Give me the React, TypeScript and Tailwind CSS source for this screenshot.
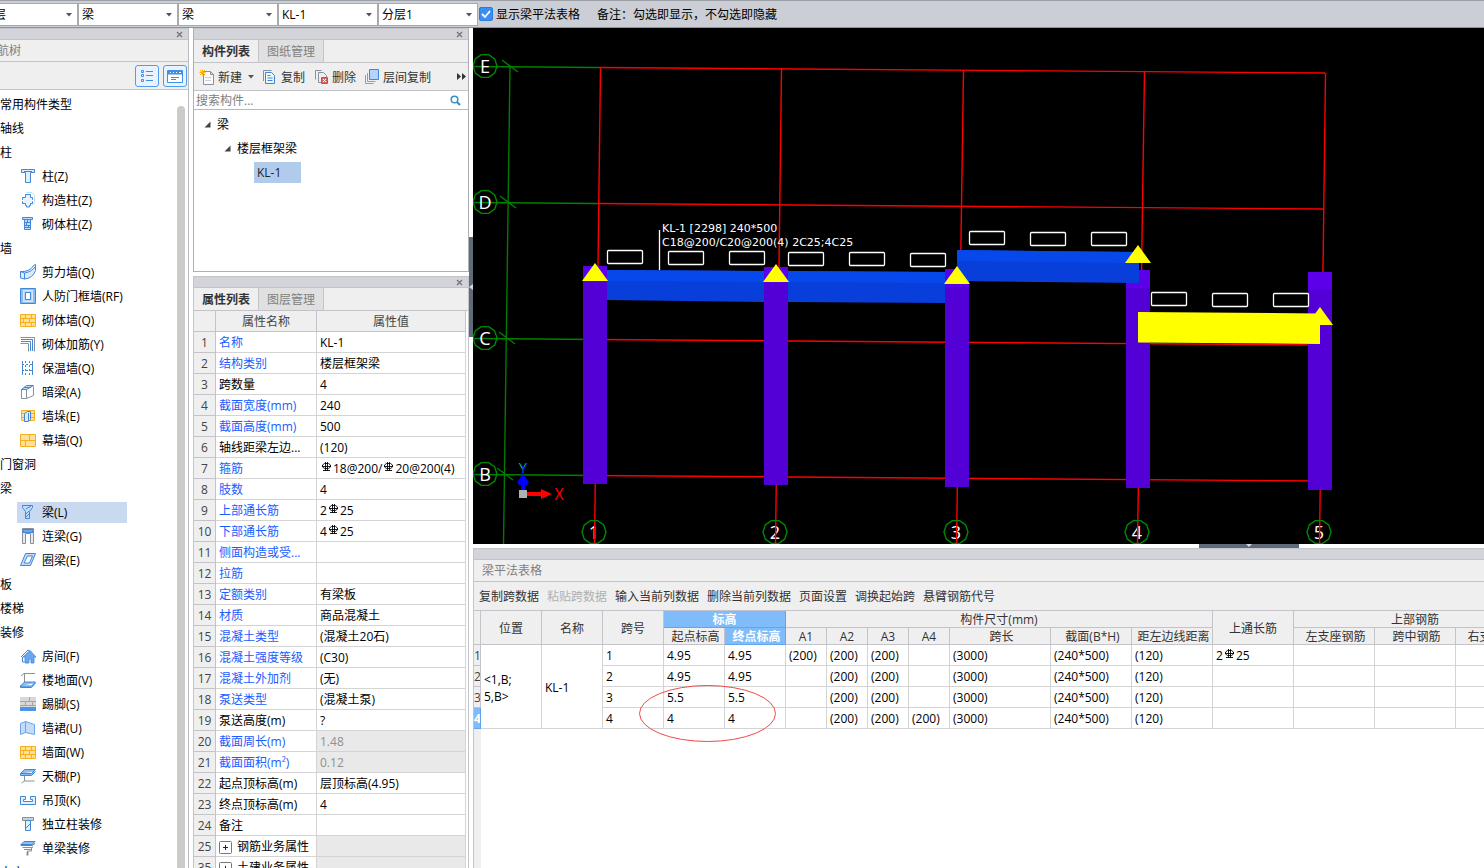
import { useState } from 'react';
import type { ReactNode } from 'react';

const B = '#3f87d9';
const L = '#c3dcf8';
const G = '#87919b';
const O = '#f5b01c';
const Y = '#fde0a0';

const bricks = (
  <g>
    <path d="M.5 2.500h15v12H.5z" fill={Y} stroke={O} />
    <path d="M.5 6.500h15M.5 10.500h15M5.500 2.500v4M11.500 2.500v4M3.500 6.500v4M9.500 6.500v4M5.500 10.500v4M11.500 10.500v4" stroke={O} />
  </g>
);

const icons: Record<string, ReactNode> = {
  column: <path d="M1.500 1.500h13v3h-4v10h-5v-10h-4zM4 3.500h8" fill="#e3effc" stroke={B} />,
  tieColumn: (
    <g>
      <path d="M6 .5h6l2.500 3v7l-2.500 3" stroke={L} />
      <path d="M5.500 2.500h5v3h2v6h-2v2h-1v1.500h-3v-1.500h-1v-2h-3v-6h3z" fill="#e8f2fd" stroke={B} />
      <path d="M2 8.500h2M11 8.500h3" stroke="#fff" strokeWidth="1.500" />
    </g>
  ),
  brickColumn: (
    <g>
      <path d="M2.500 1.500h10v2h-10zM4.500 3.500h6v10h-6z" fill={L} stroke={B} />
      <path d="M5 6.500h5M5 9.500h5M5 11.500h5M7.500 4v2M6.500 7v2M8.500 10v1" stroke={B} />
    </g>
  ),
  shearWall: <path d="M.5 7.500q9 1 13-6l2-1v6q-3 8-11 8.500l-4-1zM4.500 9v6M.5 7.500l4 1.500q7-1 11-6.500" fill="#dcebfb" stroke={B} />,
  gate: (
    <g>
      <path d="M.5 .5h15v15h-15z" fill="#8dbcf0" stroke={B} />
      <path d="M3.500 2.500h9v11h-9z" fill="#b9d7f7" stroke="#d8e8fb" />
      <path d="M5.500 4.500h5v7h-5z" fill="#fff" stroke={B} />
    </g>
  ),
  bricks,
  rebar: (
    <g>
      <path d="M.5 1.500h14v14M.5 7.500h8v8" stroke={G} />
      <path d="M1 3.500h11.500V15M1 5.500h9.500V15" stroke={B} />
    </g>
  ),
  insulation: (
    <g>
      <path d="M2.500 1v14M12.500 1v14" stroke={B} />
      <path d="M5.500 1v14M9.500 1v14" stroke={B} strokeDasharray="2 2" />
      <path d="M2 4.500h11M2 10.500h11" stroke={B} strokeDasharray="2 2" />
    </g>
  ),
  hiddenBeam: (
    <g>
      <path d="M1.500 5.500h5v9h-5zM6.500 14.500l7-3v-9" fill="#fff" stroke={G} />
      <path d="M1.500 5.500l5-4h7l-7 4zM4 3.500h7" fill={L} stroke={B} />
    </g>
  ),
  buttress: (
    <g>
      <path d="M1.500 2.500h13v10h-13z" fill={Y} stroke={O} />
      <path d="M1.500 5.500h13M1.500 9.500h13" stroke={O} />
      <path d="M4.500 5.500l3-2h3v8l-2 2h-4zM8.500 5v8" fill="#dcebfb" stroke={B} />
    </g>
  ),
  curtain: (
    <g>
      <path d="M.5 2.500h15v12H.5z" fill={Y} stroke={O} />
      <path d="M.5 8.500h15M9.500 2.500v6M5.500 8.500v6" stroke={O} />
    </g>
  ),
  beam: (
    <g>
      <path d="M2.500 1.500h10v2l-3 4v7h-4v-7l-3-4z" fill={L} stroke={B} />
      <path d="M6 5l5-3M6 10l3-3M6 13l3-3" stroke={B} />
    </g>
  ),
  linkBeam: (
    <g>
      <path d="M2.500 .5h11v15h-3v-10h-5v10h-3z" fill="#e7eaed" stroke={G} />
      <path d="M3 1.500h10v3H3z" fill="#6ba6e9" stroke={B} />
    </g>
  ),
  ringBeam: <path d="M5.500 1.500h10l-5 12H.5zM7.500 4h5l-3 7H4z" fill={L} fillRule="evenodd" stroke={B} />,
  room: (
    <g>
      <path d="M1 9l7-7 3 2M2.500 9v5h2" stroke={B} />
      <path d="M3 9l7-6.500L16 9h-2v6h-3v-4H9v4H5V9z" fill="#6ba6ee" stroke={B} strokeWidth=".8" />
    </g>
  ),
  floor: (
    <g>
      <path d="M1 4l3-2.500h11M4.500 2v8" stroke={G} />
      <path d="M.5 14l4-4h11l-4 4zM.5 14v1.500h11l4-4.500" fill="#8dbcf0" stroke={B} />
    </g>
  ),
  skirting: (
    <g>
      <path d="M0 1h16v10H0z" fill="#d8d8d8" />
      <path d="M0 5.500h16M0 9.500h16M9.500 1v4M5.500 5v5M12.500 5v5" stroke="#a5a5a5" />
      <path d="M0 11h16v4H0z" fill="#4d94e6" />
    </g>
  ),
  dado: <path d="M.5 3.500l5-2v11l-5 2zM5.500 1.500l9 3v10l-9-2z" fill="#c3dcf8" stroke="#6ba6e9" />,
  ceiling: (
    <g>
      <path d="M4.500 5v8h10M4.500 13l-3 2" stroke={G} />
      <path d="M.5 5.500l4-4h11l-4 4zM.5 5.500v2h11l4-4" fill="#8dbcf0" stroke={B} />
    </g>
  ),
  suspended: <path d="M.5 4.500h5v3h-2v2h9v-2h-2v-3h5v8H.5z" fill="#e3effc" stroke={B} />,
  soloColumn: (
    <g>
      <path d="M2.500 1.500h11v3h-11z" fill="#cdd2d6" stroke={G} />
      <path d="M5.500 4.500h5v10h-5zM6 12l4-4" fill="#e3effc" stroke={B} />
    </g>
  ),
  soloBeam: (
    <g>
      <path d="M1 4.500l3-3h11l-3 3zM1 4.500v1h11l3-2" fill="#8dbcf0" stroke={B} />
      <path d="M2.500 7.500h10v-1M4 9.500h7M11.500 8v3H7.500v4" stroke={G} />
      <path d="M7.500 12v3.500" stroke={G} strokeWidth="2" />
    </g>
  ),
  create: (
    <g>
      <path d="M4.500 2.500h7l3 3v10h-10zM11.500 2.500v3h3" fill="#fafafa" stroke={G} />
      <path d="M6 8.500h6M6 11.500h6" stroke="#d4c9d8" />
      <path d="M1 1l5 5M6 1L1 6M3.500 .5v6M.5 3.500h6" stroke={O} />
    </g>
  ),
  copy: (
    <g>
      <path d="M.5 12V1.500h8" stroke={G} />
      <path d="M2.500 3.500h6l3 3v8h-9z" fill="#eef5fd" stroke={B} />
      <path d="M4.500 6.500h3M4.500 9h5M4.500 11.500h5" stroke={B} />
    </g>
  ),
  remove: (
    <g>
      <path d="M1.500 10.500v-9h6M4.500 13.500v-10h5l3 3v2M4.500 13.500h3" stroke={G} />
      <path d="M7.500 8.500h6v6h-6z" fill="#e2645f" stroke="#c8504b" />
      <path d="M9 10l3 3M12 10l-3 3" stroke="#fff" />
    </g>
  ),
  layerCopy: (
    <g>
      <path d="M.5 6v8.500h8M2.500 4v8.500h8" stroke="#e38a3c" />
      <path d="M4.500 .5h9v10h-9z" fill="#b5d4fb" stroke={B} />
    </g>
  ),
};

function Icon({ name }: { name: string }) {
  return (
    <svg viewBox="0 0 16 16" fill="none" className="size-4 shrink-0" aria-hidden="true">
      {icons[name]}
    </svg>
  );
}

type TreeNode = { label: string; icon?: string };

const navTree: TreeNode[] = [
  { label: '常用构件类型' },
  { label: '轴线' },
  { label: '柱' },
  { label: '柱(Z)', icon: 'column' },
  { label: '构造柱(Z)', icon: 'tieColumn' },
  { label: '砌体柱(Z)', icon: 'brickColumn' },
  { label: '墙' },
  { label: '剪力墙(Q)', icon: 'shearWall' },
  { label: '人防门框墙(RF)', icon: 'gate' },
  { label: '砌体墙(Q)', icon: 'bricks' },
  { label: '砌体加筋(Y)', icon: 'rebar' },
  { label: '保温墙(Q)', icon: 'insulation' },
  { label: '暗梁(A)', icon: 'hiddenBeam' },
  { label: '墙垛(E)', icon: 'buttress' },
  { label: '幕墙(Q)', icon: 'curtain' },
  { label: '门窗洞' },
  { label: '梁' },
  { label: '梁(L)', icon: 'beam' },
  { label: '连梁(G)', icon: 'linkBeam' },
  { label: '圈梁(E)', icon: 'ringBeam' },
  { label: '板' },
  { label: '楼梯' },
  { label: '装修' },
  { label: '房间(F)', icon: 'room' },
  { label: '楼地面(V)', icon: 'floor' },
  { label: '踢脚(S)', icon: 'skirting' },
  { label: '墙裙(U)', icon: 'dado' },
  { label: '墙面(W)', icon: 'bricks' },
  { label: '天棚(P)', icon: 'ceiling' },
  { label: '吊顶(K)', icon: 'suspended' },
  { label: '独立柱装修', icon: 'soloColumn' },
  { label: '单梁装修', icon: 'soloBeam' },
  { label: '土方' },
];

type Property = { no: number; name: string; value: string; link?: boolean; locked?: boolean; group?: boolean };

// '#' in a value stands for the HRB400 bar mark
const properties: Property[] = [
  { no: 1, name: '名称', value: 'KL-1', link: true },
  { no: 2, name: '结构类别', value: '楼层框架梁', link: true },
  { no: 3, name: '跨数量', value: '4' },
  { no: 4, name: '截面宽度(mm)', value: '240', link: true },
  { no: 5, name: '截面高度(mm)', value: '500', link: true },
  { no: 6, name: '轴线距梁左边...', value: '(120)' },
  { no: 7, name: '箍筋', value: '#18@200/#20@200(4)', link: true },
  { no: 8, name: '肢数', value: '4', link: true },
  { no: 9, name: '上部通长筋', value: '2#25', link: true },
  { no: 10, name: '下部通长筋', value: '4#25', link: true },
  { no: 11, name: '侧面构造或受...', value: '', link: true },
  { no: 12, name: '拉筋', value: '', link: true },
  { no: 13, name: '定额类别', value: '有梁板', link: true },
  { no: 14, name: '材质', value: '商品混凝土', link: true },
  { no: 15, name: '混凝土类型', value: '(混凝土20石)', link: true },
  { no: 16, name: '混凝土强度等级', value: '(C30)', link: true },
  { no: 17, name: '混凝土外加剂', value: '(无)', link: true },
  { no: 18, name: '泵送类型', value: '(混凝土泵)', link: true },
  { no: 19, name: '泵送高度(m)', value: '?' },
  { no: 20, name: '截面周长(m)', value: '1.48', link: true, locked: true },
  { no: 21, name: '截面面积(m²)', value: '0.12', link: true, locked: true },
  { no: 22, name: '起点顶标高(m)', value: '层顶标高(4.95)' },
  { no: 23, name: '终点顶标高(m)', value: '4' },
  { no: 24, name: '备注', value: '' },
  { no: 25, name: '钢筋业务属性', value: '', locked: true, group: true },
  { no: 35, name: '土建业务属性', value: '', locked: true, group: true },
];

function RebarMark() {
  return (
    <svg viewBox="0 0 11 10" fill="none" stroke="#000" className="mx-px inline-block h-2.5 w-[11px] align-[1px]" role="img" aria-label="HRB400">
      <path d="M3.500 1.500h4l2 1.500v2l-2 1.500h-4L1.500 5V3zM4.500 0v9M6.500 0v9M1 4.500h9M2 8.500h7" strokeWidth=".9" />
    </svg>
  );
}

function BarText({ text }: { text: string }) {
  const parts = text.split('#');
  return (
    <>
      {parts.map((part, i) => (
        <span key={i}>
          {i > 0 && <RebarMark />}
          {part}
        </span>
      ))}
    </>
  );
}

function Strip({ closable = true }: { closable?: boolean }) {
  return (
    <div className="flex h-3 shrink-0 items-center justify-end border-y border-[#c3c3c9] bg-[#d3d4da] pr-1">
      {closable && (
        <button aria-label="关闭" className="flex size-2.5 items-center justify-center">
          <svg viewBox="0 0 7 7" className="size-[7px]" stroke="#777" strokeWidth="1.400">
            <path d="M1 1l5 5M6 1L1 6" />
          </svg>
        </button>
      )}
    </div>
  );
}

function Tabs({ labels }: { labels: string[] }) {
  const [active, setActive] = useState(0);
  return (
    <div className="flex h-[23px] shrink-0 border-b border-[#c3c3c9] bg-[#efefef]" role="tablist">
      {labels.map((label, i) => (
        <button
          key={label}
          role="tab"
          aria-selected={i === active}
          onClick={() => setActive(i)}
          className={
            i === active
              ? 'w-[65px] border-r border-[#c3c3c9] pt-0.5 font-bold text-[#333]'
              : 'w-[65px] border-r border-[#c3c3c9] bg-[#e0e0e0] pt-0.5 text-[#808080]'
          }
        >
          {label}
        </button>
      ))}
    </div>
  );
}

function Combo({ label, value }: { label: string; value: string }) {
  return (
    <div className="relative h-[23px] w-25 shrink-0 border border-[#a9a9a9] bg-white">
      <select aria-label={label} className="h-full w-full appearance-none pt-0.5 pl-[3px] text-black outline-none">
        <option>{value}</option>
      </select>
      <svg viewBox="0 0 6 4" className="pointer-events-none absolute top-[9px] right-[5px] h-1 w-1.5" fill="#555">
        <path d="M0 0h6L3 3.500z" />
      </svg>
    </div>
  );
}

function TopBar() {
  return (
    <header className="flex h-7 shrink-0 items-center border-t border-b border-t-[#9b9fa6] border-b-[#8e939b] bg-[#cbced4]">
      <div className="-ml-[22px] flex">
        <Combo label="楼层" value="首层" />
        <Combo label="构件大类" value="梁" />
        <Combo label="构件类型" value="梁" />
        <Combo label="构件" value="KL-1" />
        <Combo label="分层" value="分层1" />
      </div>
      <label className="ml-px flex items-center gap-[3px] text-black">
        <span className="relative flex size-3.5">
          <input type="checkbox" defaultChecked className="peer size-3.5 appearance-none rounded-xs border border-[#2a7de0] bg-white checked:bg-[#3b8ef0]" />
          <svg viewBox="0 0 14 14" className="pointer-events-none absolute inset-0 hidden peer-checked:block" fill="none" stroke="#fff" strokeWidth="1.800">
            <path d="M3 7l3 3 5-6" />
          </svg>
        </span>
        <span className="pt-0.5">显示梁平法表格</span>
      </label>
      <span className="ml-[17px] pt-0.5 text-black">备注：勾选即显示，不勾选即隐藏</span>
    </header>
  );
}

function NavTree() {
  const [selected, setSelected] = useState('梁(L)');
  return (
    <aside className="flex w-[189px] shrink-0 flex-col border-r border-[#b9bbc3] bg-white">
      <Strip />
      <div className="h-[22px] shrink-0 border-b border-[#c3c3c9] bg-[#efefef] pt-px leading-5 text-[#808080]">
        <h2 className="-ml-[15px]">导航树</h2>
      </div>
      <div className="flex h-7 shrink-0 items-center justify-end gap-1 border-b border-[#c3c3c9] bg-[#efefef] pr-px">
        <button aria-label="列表视图" className="flex h-[22px] w-6 items-center justify-center rounded-[3px] border border-[#4f9bee] bg-[#e8f3ff]">
          <svg viewBox="0 0 14 14" className="size-3.5" fill="none" stroke="#3f8fe5">
            <path d="M1.500 1.500h2v2h-2zM1.500 5.500h2v2h-2zM1.500 10.500h2v2h-2zM6 2.500h7M6 6.500h7M6 11.500h7" />
          </svg>
        </button>
        <button aria-label="面板视图" className="flex h-[22px] w-6 items-center justify-center rounded-[3px] border border-[#4f9bee] bg-[#e8f3ff]">
          <svg viewBox="0 0 16 14" className="h-3.5 w-4" fill="none" stroke="#3f8fe5">
            <path d="M.5 1.500h15v12H.5z" fill="#fff" />
            <path d="M1 2h14v3H1z" fill="#3f8fe5" />
            <path d="M3 3.500h1M6 3.500h1M9 3.500h1M12 3.500h2" stroke="#fff" />
            <path d="M4 8.500h8M4 10.500h5" />
          </svg>
        </button>
      </div>
      <div className="flex min-h-0 flex-1 overflow-hidden pt-0.5">
        <ul className="flex-1">
          {navTree.map((node) => (
            <li key={node.label + (node.icon ?? '')} className="flex h-6 items-center text-black">
              {node.icon ? (
                <button
                  onClick={() => setSelected(node.label)}
                  className={
                    selected === node.label
                      ? 'ml-[17px] flex h-[21px] w-[110px] items-center gap-1.5 bg-[#c9d9ef] pl-[3px]'
                      : 'ml-[17px] flex h-[21px] w-[110px] items-center gap-1.5 pl-[3px]'
                  }
                >
                  <Icon name={node.icon} />
                  <span className="pt-0.5 whitespace-nowrap">{node.label}</span>
                </button>
              ) : (
                <span className="pt-0.5">{node.label}</span>
              )}
            </li>
          ))}
        </ul>
        <div className="mt-3.5 mr-[3px] w-2 rounded-t-full bg-[#cbcbcb]" />
      </div>
    </aside>
  );
}

function Expander() {
  return (
    <svg viewBox="0 0 7 7" className="size-[7px]">
      <path d="M6.500 .5v6h-6z" fill="#444" />
    </svg>
  );
}

function ComponentList() {
  return (
    <section className="flex h-61 shrink-0 flex-col border border-t-0 border-[#b0b0b4] bg-white">
      <Strip />
      <Tabs labels={['构件列表', '图纸管理']} />
      <div className="flex h-7 shrink-0 items-center gap-[9px] border-b border-[#c3c3c9] bg-[#efefef] pr-0.5 pl-[5px] text-[#333]">
        <button className="flex items-center gap-[3px]">
          <Icon name="create" />
          <span className="pt-0.5">新建</span>
          <svg viewBox="0 0 6 4" className="ml-[3px] h-1 w-1.5" fill="#555">
            <path d="M0 0h6L3 3.500z" />
          </svg>
        </button>
        <button className="flex items-center gap-0.5">
          <Icon name="copy" />
          <span className="pt-0.5">复制</span>
        </button>
        <button className="flex items-center gap-0.5">
          <Icon name="remove" />
          <span className="pt-0.5">删除</span>
        </button>
        <button className="flex items-center gap-0.5">
          <Icon name="layerCopy" />
          <span className="pt-0.5">层间复制</span>
        </button>
        <button aria-label="更多" className="ml-auto">
          <svg viewBox="0 0 9 7" className="h-[7px] w-[9px]" fill="#333">
            <path d="M0 0l4 3.500L0 7zM5 0l4 3.500L5 7z" />
          </svg>
        </button>
      </div>
      <label className="flex h-[19px] shrink-0 items-center border-b border-[#b9b9bd] pr-[7px] pl-0.5">
        <input aria-label="搜索构件" placeholder="搜索构件..." className="min-w-0 flex-1 pt-0.5 outline-none placeholder:text-[#808080]" />
        <svg viewBox="0 0 11 11" className="size-[11px]" fill="none" stroke="#3a8fc4" strokeWidth="1.500">
          <circle cx="4.500" cy="4.500" r="3.300" />
          <path d="M7 7l3 3" strokeWidth="2.200" />
        </svg>
      </label>
      <ul className="pt-0.5 text-black">
        <li>
          <div className="flex h-6 items-center gap-1.5 pl-2.5">
            <Expander />
            <span className="pt-0.5">梁</span>
          </div>
          <ul>
            <li>
              <div className="flex h-6 items-center gap-1.5 pl-[30px]">
                <Expander />
                <span className="pt-0.5">楼层框架梁</span>
              </div>
              <ul>
                <li className="flex h-6 items-center pl-15">
                  <button className="h-[21px] w-[47px] bg-[#b1cbed] pt-0.5 pl-[3px] text-left text-[#222]">KL-1</button>
                </li>
              </ul>
            </li>
          </ul>
        </li>
      </ul>
    </section>
  );
}

function PropertyList() {
  return (
    <section className="mt-1 flex min-h-0 flex-1 flex-col overflow-hidden border-x border-[#c3c3c9] bg-white">
      <Strip />
      <Tabs labels={['属性列表', '图层管理']} />
      <div className="min-h-0 flex-1 overflow-hidden">
        <table className="w-[272px] table-fixed border-separate border-spacing-0 leading-4 text-black">
          <colgroup>
            <col className="w-[22px]" />
            <col className="w-[101px]" />
            <col />
          </colgroup>
          <thead>
            <tr className="h-[21px] bg-[#efefef] text-[#444]">
              <th className="border-r border-b border-[#c3c3c9]" />
              <th className="border-r border-b border-[#c3c3c9] p-0 pt-0.5 font-normal">属性名称</th>
              <th className="border-r border-b border-[#c3c3c9] p-0 pt-0.5 font-normal">属性值</th>
            </tr>
          </thead>
          <tbody>
            {properties.map((p) => (
              <tr key={p.no} className="h-[21px]">
                <td className="border-r border-b border-[#c3c3c9] bg-[#efefef] p-0 pt-0.5 text-center text-[#444]">{p.no}</td>
                <td className={`overflow-hidden border-r border-b border-[#d4d4d4] p-0 pt-0.5 pl-[3px] whitespace-nowrap ${p.link ? 'text-[#1a5cff]' : ''}`}>
                  {p.group ? (
                    <button className="flex items-center gap-[5px]">
                      <svg viewBox="0 0 13 13" className="size-[13px]" fill="#fff" stroke="#777">
                        <rect x=".5" y=".5" width="12" height="12" rx="1" />
                        <path d="M4 6.500h5M6.500 4v5" stroke="#222" />
                      </svg>
                      {p.name}
                    </button>
                  ) : (
                    p.name
                  )}
                </td>
                <td className={`border-r border-b border-[#d4d4d4] p-0 pt-0.5 pl-[3px] whitespace-nowrap ${p.locked ? 'bg-[#e9e9e9] text-[#909090]' : ''}`}>
                  <BarText text={p.value} />
                </td>
              </tr>
            ))}
          </tbody>
        </table>
      </div>
    </section>
  );
}

const rowAxes = [
  { name: 'E', y: 66, x: 600 },
  { name: 'D', y: 202, x: 598 },
  { name: 'C', y: 338, x: 597 },
  { name: 'B', y: 474, x: 595 },
];

const colAxes = [
  { name: '1', top: 600, bottom: 594, y: 67 },
  { name: '2', top: 781, bottom: 775, y: 68 },
  { name: '3', top: 963, bottom: 956, y: 70 },
  { name: '4', top: 1144, bottom: 1137, y: 71 },
  { name: '5', top: 1325, bottom: 1319, y: 73 },
];

const columns = [
  { x: 583, y: 266, light: 15 },
  { x: 764, y: 267, light: 16 },
  { x: 945, y: 269, light: 18 },
  { x: 1126, y: 270, light: 18 },
  { x: 1308, y: 272, light: 18 },
];

const supports = [
  [595, 264],
  [776, 265],
  [957, 267],
  [1138, 246],
  [1320, 308],
];

const tagBoxes = [
  [607, 250],
  [668, 251],
  [729, 251],
  [788, 252],
  [849, 252],
  [910, 253],
  [969, 231],
  [1030, 232],
  [1091, 232],
  [1151, 292],
  [1212, 293],
  [1273, 293],
];

function AxisBubble({ x, y }: { x: number; y: number }) {
  const points = Array.from({ length: 10 }, (_, i) => {
    const a = (i * Math.PI) / 5;
    return `${(x + 12 * Math.cos(a)).toFixed(1)},${(y + 12 * Math.sin(a)).toFixed(1)}`;
  }).join(' ');
  return <polygon points={points} fill="none" stroke="#008a00" />;
}

function ModelView() {
  return (
    <div className="min-h-0 flex-1 overflow-hidden bg-black">
      <svg viewBox="473 28 1011 516" preserveAspectRatio="xMinYMin slice" className="block h-full w-full" fontFamily="'Open Sans', sans-serif">
        {colAxes.map((a) => (
          <text key={a.name} x={a.bottom} y="539" fontSize="18" fill="#fff" textAnchor="middle">
            {a.name}
          </text>
        ))}
        <g fill="none" strokeWidth="1.400">
          <path d="M510 66L503.500 544" stroke="#007a00" />
          {rowAxes.map((a) => (
            <g key={a.name}>
              <path d={`M473 ${a.y + 0.5}L${a.x} ${a.y + 1.5}`} stroke="#008000" />
              <path d={`M${a.x} ${a.y + 1.5}l725 5.500`} stroke="#f00" />
              <path d={`M${a.x - 98} ${a.y - 6}l16 12`} stroke="#008000" />
              <AxisBubble x={485} y={a.y} />
            </g>
          ))}
          {colAxes.map((a) => (
            <g key={a.name}>
              <path d={`M${a.top + 0.5} ${a.y}L${a.bottom + 0.5} 544`} stroke="#f00" />
              <AxisBubble x={a.bottom} y={532} />
            </g>
          ))}
        </g>
        {rowAxes.map((a) => (
          <text key={a.name} x="485" y={a.y + 7} fontSize="18" fill="#fff" textAnchor="middle">
            {a.name}
          </text>
        ))}

        {columns.map((c) => (
          <g key={c.x}>
            <rect x={c.x} y={c.y} width="24" height="218" fill="#5200d6" />
            <rect x={c.x} y={c.y} width="24" height={c.light} fill="#5c00ea" />
          </g>
        ))}
        <path d="M607 270L764 271V302L607 300zM788 271L945 272V303L788 302z" fill="#083fdb" />
        <path d="M607 270L764 271V282L607 281zM788 271L945 272V283L788 282z" fill="#0748ea" />
        <path d="M957 250L1139 252V283L957 281z" fill="#083fdb" />
        <path d="M957 250L1139 252V263L957 261z" fill="#0748ea" />
        <path d="M1138 312L1320 313.500V344L1138 342.500z" fill="#ff0" />
        {supports.map(([x, y]) => (
          <path key={x} d={`M${x} ${y - 1}l13 18h-26z`} fill="#ff0" />
        ))}
        {tagBoxes.map(([x, y]) => (
          <rect key={x} x={x + 0.5} y={y + 0.5} width="35" height="13" rx="1" fill="none" stroke="#fff" strokeWidth="1.300" />
        ))}

        <path d="M659.500 230v40" stroke="#fff" strokeWidth="1.300" />
        <g fill="#fff" fontSize="11" fontFamily="'DejaVu Sans', sans-serif">
          <text x="662" y="232">KL-1 [2298] 240*500</text>
          <text x="662" y="246">C18@200/C20@200(4) 2C25;4C25</text>
        </g>

        <g>
          <text x="523" y="473" fontSize="15" fill="#22e022" textAnchor="middle">
            Y
          </text>
          <path d="M520 463l3 4v6M527 463l-6 12" stroke="#00f" fill="none" />
          <path d="M523 474l6 8-2 3h-2v7h-4v-7h-2l-2-3z" fill="#00f" />
          <rect x="519" y="490" width="8" height="8" fill="#b0b0b0" />
          <path d="M527 492h14v-3l11 5-11 5v-3h-14z" fill="#f00" />
          <text x="559" y="500" fontSize="16" fill="#f00" textAnchor="middle">
            X
          </text>
        </g>
      </svg>
    </div>
  );
}

const spans = [
  { no: 1, start: '4.95', end: '4.95', a: ['(200)', '(200)', '(200)', ''], top: '2#25' },
  { no: 2, start: '4.95', end: '4.95', a: ['', '(200)', '(200)', ''], top: '' },
  { no: 3, start: '5.5', end: '5.5', a: ['', '(200)', '(200)', ''], top: '' },
  { no: 4, start: '4', end: '4', a: ['', '(200)', '(200)', '(200)'], top: '' },
];

const actions = ['复制跨数据', '粘贴跨数据', '输入当前列数据', '删除当前列数据', '页面设置', '调换起始跨', '悬臂钢筋代号'];

const th = 'border-r border-b border-[#c3c3c9] p-0 pt-0.5 font-normal whitespace-nowrap';
const subTh = 'border-r border-b border-[#c3c3c9] p-0 pt-0.5 pl-[3px] font-normal whitespace-nowrap';
const td = 'border-r border-b border-[#d4d4d4] p-0 pt-0.5 pl-[3px] whitespace-nowrap';

function BeamTable() {
  return (
    <section className="flex h-80 shrink-0 flex-col overflow-hidden border-l border-[#c3c3c9] bg-white">
      <Strip closable={false} />
      <h2 className="h-[22px] shrink-0 border-b border-[#c3c3c9] bg-[#efefef] pt-px pl-2 leading-5 text-[#808080]">梁平法表格</h2>
      <div className="flex h-7 shrink-0 items-center gap-2 bg-[#efefef] pt-0.5 pl-[5px] text-[#333]">
        {actions.map((label) => (
          <button key={label} disabled={label === '粘贴跨数据'} className="whitespace-nowrap disabled:text-[#b0b0b0]">
            {label}
          </button>
        ))}
      </div>
      <div className="relative flex min-h-0 flex-1 flex-col overflow-hidden border-t border-[#c3c3c9]">
        <table className="w-[1063px] shrink-0 table-fixed border-separate border-spacing-0 leading-4 text-black">
          <colgroup>
            <col className="w-[7px]" />
            <col className="w-[61px]" />
            <col className="w-[61px]" />
            <col className="w-[61px]" />
            <col className="w-[61px]" />
            <col className="w-[61px]" />
            <col className="w-[41px]" />
            <col className="w-[41px]" />
            <col className="w-[41px]" />
            <col className="w-[41px]" />
            <col className="w-[101px]" />
            <col className="w-[81px]" />
            <col className="w-[81px]" />
            <col className="w-[81px]" />
            <col className="w-[81px]" />
            <col className="w-[81px]" />
            <col className="w-[81px]" />
          </colgroup>
          <thead className="bg-[#efefef] leading-[14px] text-[#333]">
            <tr className="h-[17px]">
              <th rowSpan={2} className={th} />
              <th rowSpan={2} className={th}>位置</th>
              <th rowSpan={2} className={th}>名称</th>
              <th rowSpan={2} className={th}>跨号</th>
              <th colSpan={2} className="border-r border-b border-[#62a5ee] bg-[#80bbfa] p-0 pt-0.5 font-bold text-white">标高</th>
              <th colSpan={7} className={th}>构件尺寸(mm)</th>
              <th rowSpan={2} className={th}>上通长筋</th>
              <th colSpan={3} className={th}>上部钢筋</th>
            </tr>
            <tr className="h-[17px]">
              <th className={subTh}>起点标高</th>
              <th className="border-r border-b border-[#62a5ee] bg-[#80bbfa] p-0 pt-0.5 pl-[3px] font-bold whitespace-nowrap text-white">终点标高</th>
              <th className={th}>A1</th>
              <th className={th}>A2</th>
              <th className={th}>A3</th>
              <th className={th}>A4</th>
              <th className={subTh}>跨长</th>
              <th className={subTh}>截面(B*H)</th>
              <th className={subTh}>距左边线距离</th>
              <th className={subTh}>左支座钢筋</th>
              <th className={subTh}>跨中钢筋</th>
              <th className={subTh}>右支座钢筋</th>
            </tr>
          </thead>
          <tbody>
            {spans.map((s, i) => (
              <tr key={s.no} className="h-[21px]">
                <td
                  className={
                    s.no === 4
                      ? 'overflow-hidden border-r border-b border-[#62a5ee] bg-[#80bbfa] p-0 pt-0.5 font-bold text-white'
                      : 'overflow-hidden border-r border-b border-[#c3c3c9] bg-[#efefef] p-0 pt-0.5 text-[#444]'
                  }
                >
                  {s.no}
                </td>
                {i === 0 && (
                  <>
                    <td rowSpan={4} className={`${td} leading-[17px]`}>
                      &lt;1,B;
                      <br />
                      5,B&gt;
                    </td>
                    <td rowSpan={4} className={td}>KL-1</td>
                  </>
                )}
                <td className={td}>{s.no}</td>
                <td className={td}>{s.start}</td>
                <td className={td}>{s.end}</td>
                {s.a.map((v, j) => (
                  <td key={j} className={td}>{v}</td>
                ))}
                <td className={td}>(3000)</td>
                <td className={td}>(240*500)</td>
                <td className={td}>(120)</td>
                <td className={td}>
                  <BarText text={s.top} />
                </td>
                <td className={td} />
                <td className={td} />
                <td className={td} />
              </tr>
            ))}
          </tbody>
        </table>
        <div className="w-[7px] flex-1 bg-[#efefef]" />
        <svg viewBox="0 0 137 57" className="pointer-events-none absolute top-[74px] left-[165px] h-[57px] w-[137px]" fill="none" stroke="#ee4a4a">
          <ellipse cx="68.500" cy="28.500" rx="68" ry="28" />
        </svg>
      </div>
    </section>
  );
}

export default function App() {
  return (
    <div className="flex h-screen flex-col overflow-hidden bg-white font-['Open_Sans','Noto_Sans_CJK_SC',sans-serif] text-[12px] leading-4">
      <TopBar />
      <main className="flex min-h-0 flex-1">
        <NavTree />
        <div className="ml-1 flex w-[276px] shrink-0 flex-col">
          <ComponentList />
          <PropertyList />
        </div>
        <div className="flex w-1 shrink-0 flex-col pt-[209px]">
          <button aria-label="折叠侧栏" className="flex h-25 w-1 items-center bg-[#5f6b78]">
            <svg viewBox="0 0 4 6" className="h-1.5 w-1" fill="#d5d8dc">
              <path d="M4 0v6L0 3z" />
            </svg>
          </button>
        </div>
        <div className="flex min-w-0 flex-1 flex-col">
          <ModelView />
          <div className="flex h-1 shrink-0 justify-center pl-[540px]">
            <button aria-label="折叠表格" className="flex h-1 w-25 justify-center bg-[#5f6b78]">
              <svg viewBox="0 0 6 4" className="h-1 w-1.5" fill="#d5d8dc">
                <path d="M0 0h6L3 3z" />
              </svg>
            </button>
          </div>
          <BeamTable />
        </div>
      </main>
    </div>
  );
}
